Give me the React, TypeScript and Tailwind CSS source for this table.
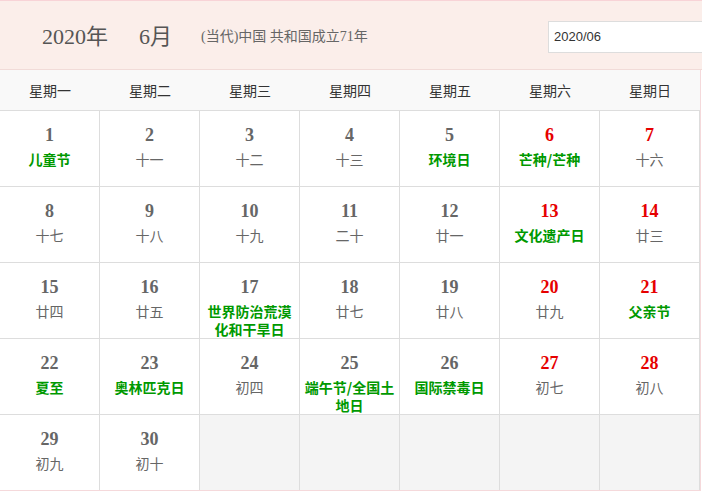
import React from "react";

type Day = { d: number; t: string; hol?: boolean; red?: boolean };

const days: Day[] = [
  { d: 1, t: "儿童节", hol: true },
  { d: 2, t: "十一" },
  { d: 3, t: "十二" },
  { d: 4, t: "十三" },
  { d: 5, t: "环境日", hol: true },
  { d: 6, t: "芒种/芒种", hol: true, red: true },
  { d: 7, t: "十六", red: true },
  { d: 8, t: "十七" },
  { d: 9, t: "十八" },
  { d: 10, t: "十九" },
  { d: 11, t: "二十" },
  { d: 12, t: "廿一" },
  { d: 13, t: "文化遗产日", hol: true, red: true },
  { d: 14, t: "廿三", red: true },
  { d: 15, t: "廿四" },
  { d: 16, t: "廿五" },
  { d: 17, t: "世界防治荒漠化和干旱日", hol: true },
  { d: 18, t: "廿七" },
  { d: 19, t: "廿八" },
  { d: 20, t: "廿九", red: true },
  { d: 21, t: "父亲节", hol: true, red: true },
  { d: 22, t: "夏至", hol: true },
  { d: 23, t: "奥林匹克日", hol: true },
  { d: 24, t: "初四" },
  { d: 25, t: "端午节/全国土地日", hol: true },
  { d: 26, t: "国际禁毒日", hol: true },
  { d: 27, t: "初七", red: true },
  { d: 28, t: "初八", red: true },
  { d: 29, t: "初九" },
  { d: 30, t: "初十" },
];

const weekdays = ["星期一", "星期二", "星期三", "星期四", "星期五", "星期六", "星期日"];

export default function App() {
  const cells: (Day | null)[] = [...days, null, null, null, null, null];
  return (
    <div
      className="w-[702px] h-[496px] overflow-hidden bg-white"
      style={{ fontFamily: '"Noto Sans CJK SC", "Liberation Sans", sans-serif' }}
    >
      <div className="w-[702px] h-[70px] border-t border-b border-t-[#f8d3d7] border-b-[#f1dbd8] bg-[#fbeeea] flex items-center pt-[3px] overflow-hidden">
        <div className="w-[548px] shrink-0 flex items-center">
          <span
            className="ml-[42px] text-[22px] text-[#555] leading-none"
            style={{ fontFamily: '"Liberation Serif", "Noto Sans CJK SC", serif' }}
          >
            2020年
          </span>
          <span
            className="ml-[31px] text-[22px] text-[#555] leading-none"
            style={{ fontFamily: '"Liberation Serif", "Noto Sans CJK SC", serif' }}
          >
            6月
          </span>
          <span
            className="ml-[29px] text-[14px] text-[#666] leading-none"
            style={{ fontFamily: '"Liberation Serif", "Noto Sans CJK SC", serif' }}
          >
            (当代)中国 共和国成立71年
          </span>
        </div>
        <div className="shrink-0 w-[180px] h-[32px] border border-[#dddddd] bg-white flex items-center pl-[5px] text-[13px] text-[#333]"
          style={{ fontFamily: '"Liberation Sans", Arial, sans-serif' }}
        >
          2020/06
        </div>
      </div>
      <div className="w-[701px] border-r border-b border-[#f5d9db]">
        <div className="grid grid-cols-[repeat(7,100px)] h-[40px] bg-[#f9f9f9]">
          {weekdays.map((w) => (
            <div key={w} className="flex items-center justify-center text-[14px] text-[#333]">
              {w}
            </div>
          ))}
        </div>
        <div className="grid grid-cols-[repeat(7,100px)]">
          {cells.map((c, i) =>
            c ? (
              <div
                key={i}
                className="h-[76px] border-t border-r border-[#dddddd] bg-white overflow-hidden text-center pt-[14px] px-[4px]"
              >
                <div
                  className={`text-[18px] leading-[20px] font-bold ${c.red ? "text-[#e60000]" : "text-[#666]"}`}
                  style={{ fontFamily: '"Liberation Serif", serif' }}
                >
                  {c.d}
                </div>
                <div
                  className={`mt-[5px] text-[14px] leading-[18px] ${c.hol ? "text-[#009900] font-bold" : "text-[#666]"}`}
                >
                  {c.t}
                </div>
              </div>
            ) : (
              <div key={i} className="h-[76px] border-t border-r border-[#dddddd] bg-[#f4f4f4]" />
            )
          )}
        </div>
      </div>
    </div>
  );
}
